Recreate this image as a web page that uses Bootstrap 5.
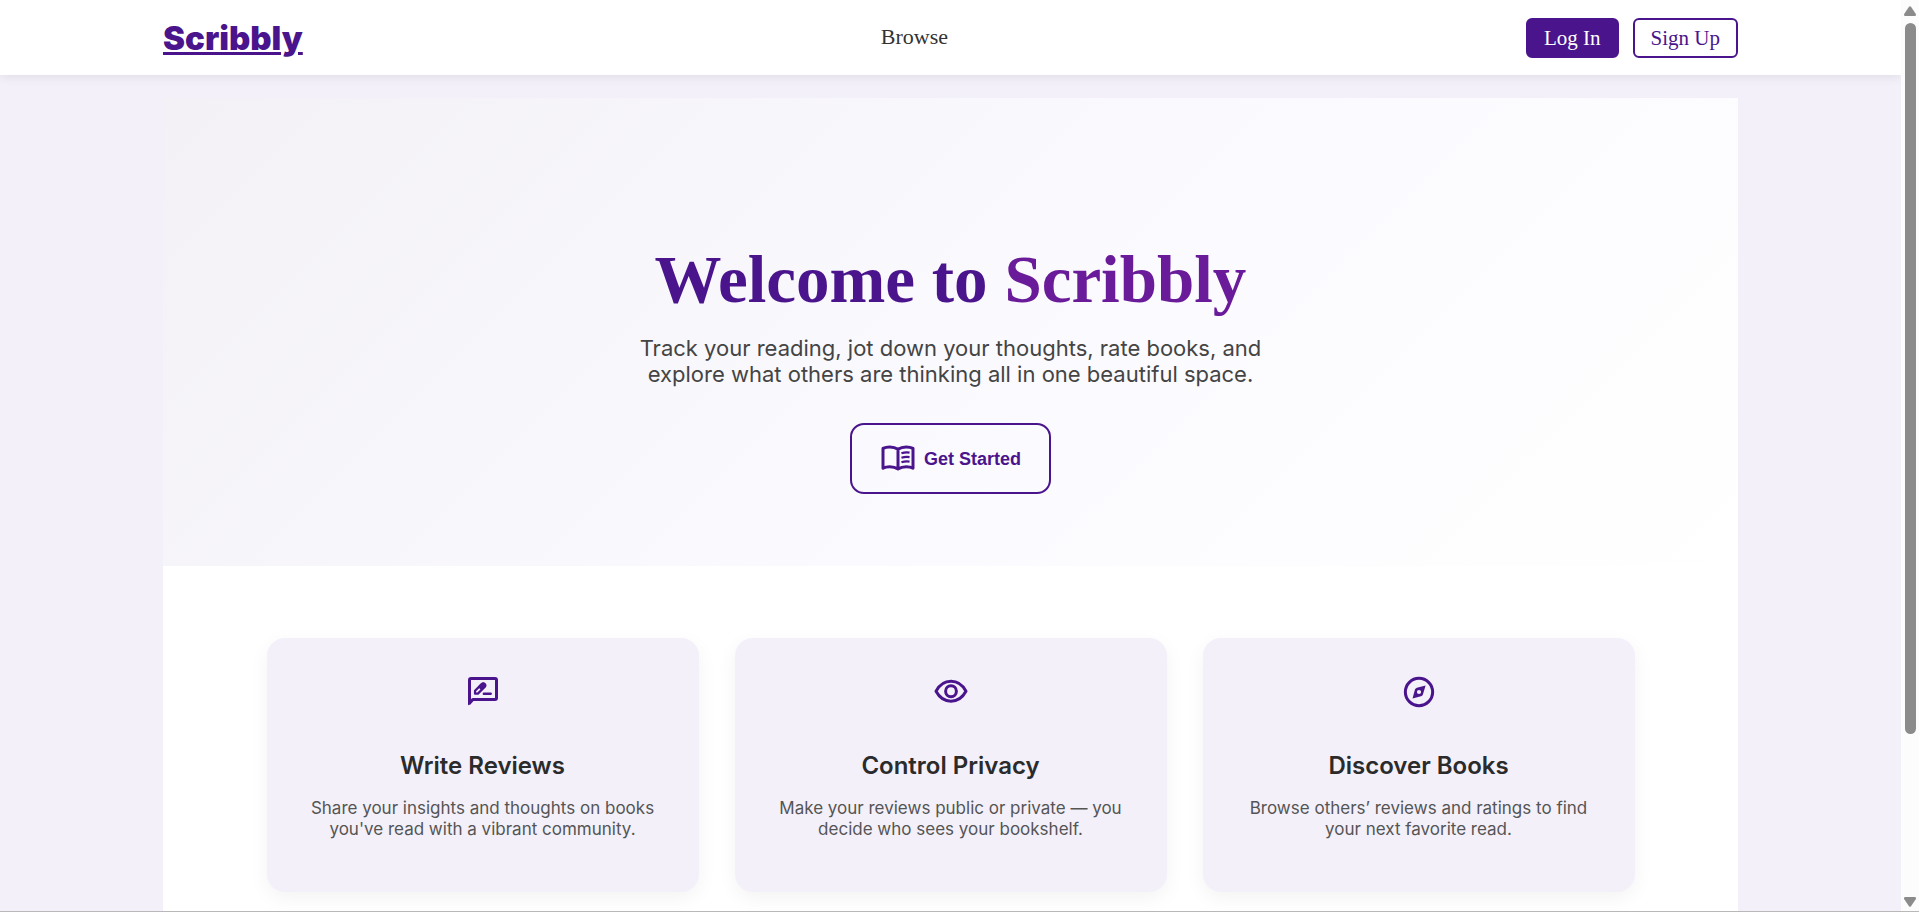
<!DOCTYPE html>
<html lang="en">
<head>
<meta charset="utf-8">
<meta name="viewport" content="width=device-width, initial-scale=1">
<title>Scribbly</title>
<link href="https://cdn.jsdelivr.net/npm/bootstrap@5.3.0/dist/css/bootstrap.min.css" rel="stylesheet">
<style>
:root{--ink:#4a148c;--ink-soft:#6a1b9a;--lilac:#f3f0fa}
body{font-family:Inter,sans-serif;background:var(--lilac);line-height:1.2}
.shell{border-bottom:1px solid #b8b8b8}
.serif{font-family:"Liberation Serif",serif}
.side-gap{padding-left:163px;padding-right:163px}
.topbar{height:75px;box-shadow:0 2px 10px rgba(0,0,0,.08);z-index:2}
.brand{font-size:33px;font-weight:900;line-height:40px;color:var(--ink);text-decoration-thickness:3px}
.menu-link{font-size:22px;color:#333}
.account{gap:14px}
.btn-pill{font-size:21px;line-height:24px;height:40px;padding:6px 16px;border:2px solid var(--ink);border-radius:6px;color:var(--ink)}
.btn-pill.solid{background:var(--ink);color:#fff}
.btn-pill:hover{border-color:var(--ink-soft);color:var(--ink-soft)}
.btn-pill.solid:hover{background:var(--ink-soft);color:#fff}
.sheet{margin:23px 163px 0}
.hero{padding:143px 24px 72px;background:linear-gradient(135deg,#f3f1f6 0%,#faf9fe 50%,#fff 100%)}
.hero h1{font-size:67px;line-height:76px;font-weight:700;color:var(--ink);margin-bottom:18px}
.hero h1 span{color:var(--ink-soft)}
.hero p{font-size:22px;line-height:26px;max-width:640px;color:#444;margin-bottom:36px}
.btn-start{height:71px;padding:0 28px;border:2px solid var(--ink);border-radius:14px;color:var(--ink);font:700 18px/24px "Liberation Sans",sans-serif}
.features{max-width:1368px;padding:72px 0;gap:36px}
.feature{flex:1 1 0;min-height:254px;padding:36px;border-radius:18px;background:var(--lilac);box-shadow:0 6px 20px rgba(0,0,0,.05)}
.feature h2{font-size:24px;line-height:30px;font-weight:600;color:#2b2b2b;margin:41px 0 17px}
.feature p{font-size:17px;line-height:21px;color:#555;margin:0}
.glyph{width:36px;height:36px}
.feature .glyph{display:block;margin:0 auto;color:var(--ink)}
.scroller{width:18px;padding:6px 0 4px;gap:7px;background:#fcfcfc;color:#8b8b8b}
.scroller .arrow{width:12px;height:10px}
.thumb{width:11px;height:82%;border-radius:6px;background:#8b8b8b}
</style>
<script src="https://cdn.jsdelivr.net/npm/bootstrap@5.3.0/dist/js/bootstrap.bundle.min.js"></script>
</head>
<body>
<div class="shell d-flex vh-100 overflow-hidden">
  <div class="flex-grow-1 overflow-hidden">
    <header class="topbar side-gap bg-white position-relative d-flex align-items-center justify-content-between">
      <a class="brand" href="#">Scribbly</a>
      <nav><a class="menu-link serif text-decoration-none" href="#">Browse</a></nav>
      <div class="account d-flex serif">
        <a class="btn btn-pill solid" href="#">Log In</a>
        <a class="btn btn-pill" href="#">Sign Up</a>
      </div>
    </header>
    <main class="sheet bg-white">
      <section class="hero d-flex flex-column align-items-center text-center">
        <h1 class="serif">Welcome to <span>Scribbly</span></h1>
        <p>Track your reading, jot down your thoughts, rate books, and explore what others are thinking all in one beautiful space.</p>
        <button class="btn-start bg-transparent d-flex align-items-center" type="button">
          <svg class="glyph" viewBox="0 0 24 24" fill="none" stroke="currentColor" stroke-width="2" stroke-linejoin="round" aria-hidden="true"><path d="M12 5.500C10.500 4.500 8.500 4 6.500 4S3 4.400 2 4.900v13.200c1.300-.7 2.800-1 4.500-1 2 0 4 .5 5.500 1.500 1.500-1 3.500-1.500 5.500-1.500 1.700 0 3.200.3 4.500 1V4.900C21 4.400 19.500 4 17.500 4s-4 .5-5.500 1.500zm0 0v13"/><path stroke-width="1.500" d="M14.300 8.200c1.600-.6 3.600-.8 5.400-.5M14.300 11.200c1.600-.6 3.600-.8 5.400-.5M14.300 14.200c1.600-.6 3.600-.8 5.400-.5"/></svg>
          <span class="ms-2">Get Started</span>
        </button>
      </section>
      <section class="features mx-auto d-flex">
        <article class="feature text-center">
          <svg class="glyph" viewBox="0 0 24 24" fill="none" stroke="currentColor" stroke-width="2" stroke-linejoin="round" aria-hidden="true"><path d="M3 19.500V4a1 1 0 0 1 1-1h16a1 1 0 0 1 1 1v12a1 1 0 0 1-1 1H5.200z"/><path fill="currentColor" stroke="none" d="M2 17h4l-4 4z"/><path stroke-width="1.500" d="M6.700 13.100v-1.900l4.600-4.600a1.350 1.350 0 0 1 1.900 1.900l-4.600 4.600z"/><path fill="currentColor" stroke="none" d="m8.600 8.500 2.200-2.300c1.700-1.600 4.300.8 2.700 2.600l-2.400 2.400z"/><path stroke-width="1.700" stroke-linecap="round" d="M12.600 13.200h4.500"/></svg>
          <h2>Write Reviews</h2>
          <p>Share your insights and thoughts on books you've read with a vibrant community.</p>
        </article>
        <article class="feature text-center">
          <svg class="glyph" viewBox="0 0 24 24" fill="none" stroke="currentColor" stroke-width="2" stroke-linejoin="round" aria-hidden="true"><path d="M2 11.500C4.300 7.300 7.800 4.900 12 4.900s7.700 2.400 10 6.600c-2.300 4.200-5.800 6.600-10 6.600S4.300 15.700 2 11.500z"/><circle cx="12" cy="11.500" r="3.600"/></svg>
          <h2>Control Privacy</h2>
          <p>Make your reviews public or private — you decide who sees your bookshelf.</p>
        </article>
        <article class="feature text-center">
          <svg class="glyph" viewBox="0 0 24 24" fill="currentColor" aria-hidden="true"><circle cx="12" cy="12" r="9.100" fill="none" stroke="currentColor" stroke-width="2"/><path fill-rule="evenodd" d="M16.400 7.700 14.600 13.600a2 2 0 0 1-1.300 1.200L7.700 16.300 9.300 10.400a2 2 0 0 1 1.300-1.200zM12 10.600a1.400 1.400 0 1 0 0 2.800 1.400 1.400 0 0 0 0-2.800z"/></svg>
          <h2>Discover Books</h2>
          <p>Browse others’ reviews and ratings to find your next favorite read.</p>
        </article>
      </section>
    </main>
  </div>
  <div class="scroller d-flex flex-column flex-shrink-0 align-items-center" aria-hidden="true">
    <svg class="arrow" viewBox="0 0 12 10" fill="currentColor"><path d="M5 .8q1-1.300 2 0l4.700 7q.9 2.200-1 2.200H1.300q-1.900 0-1-2.200z"/></svg>
    <div class="flex-grow-1"><div class="thumb"></div></div>
    <svg class="arrow" viewBox="0 0 12 10" fill="currentColor"><path d="M5 9.200q1 1.300 2 0l4.700-7q.9-2.200-1-2.200H1.300q-1.900 0-1 2.200z"/></svg>
  </div>
</div>
</body>
</html>
